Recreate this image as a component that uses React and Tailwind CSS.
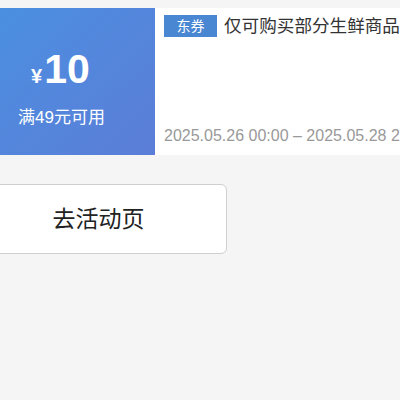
export default function App() {
  return (
    <div
      className="w-[400px] h-[400px] overflow-hidden bg-[#f5f5f5]"
      style={{ fontFamily: '"Liberation Sans", "Noto Sans CJK SC", sans-serif' }}
    >
      {/* Coupon card */}
      <div className="mt-2 flex h-[147px] w-[440px]">
        <div className="flex w-[155px] shrink-0 flex-col bg-gradient-to-br from-[#4a8fe0] to-[#5b7dd8] text-white">
          <div className="mt-[37px] flex items-baseline pl-[31px]">
            <span className="text-[20px] font-bold leading-none">¥</span>
            <span className="ml-[2px] text-[41px] font-bold leading-[48px]">10</span>
          </div>
          <div className="mt-[14px] pl-[18px] text-[17px] leading-[22px]">满49元可用</div>
        </div>
        <div className="flex flex-1 flex-col bg-white pl-[9px] pt-[7px] pb-[9px]">
          <div className="flex items-center whitespace-nowrap">
            <span className="flex h-[22px] w-[53px] items-center justify-center bg-[#4a87d3] text-[14px] text-white">
              东券
            </span>
            <span className="ml-[7px] text-[17.6px] leading-[22px] text-[#333]">仅可购买部分生鲜商品</span>
          </div>
          <div className="mt-auto whitespace-nowrap text-[16px] leading-[20px] text-[#999]">
            2025.05.26 00:00 – 2025.05.28 23:59
          </div>
        </div>
      </div>

      {/* Button */}
      <div className="mt-[29px] -ml-[30px] flex h-[70px] w-[257px] items-center justify-center rounded-[6px] border border-[#cfcfcf] bg-white text-[23px] text-[#222]">
        去活动页
      </div>
    </div>
  );
}
